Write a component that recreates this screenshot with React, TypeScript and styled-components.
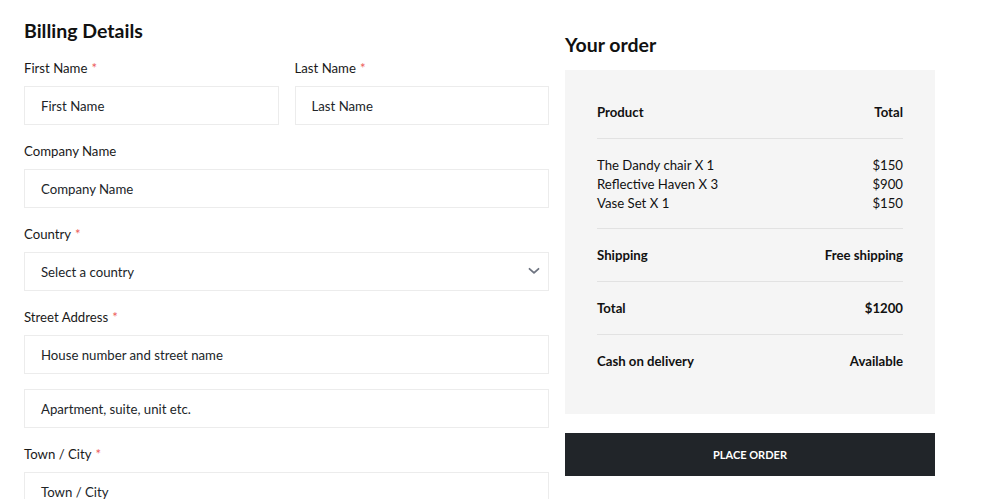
import React from "react";
import styled, { createGlobalStyle } from "styled-components";

const GlobalStyle = createGlobalStyle`
  html, body { margin: 0; padding: 0; background: #ffffff; }
  body {
    font-family: "Lato", "Noto Sans", sans-serif;
    color: #212529;
    -webkit-font-smoothing: antialiased;
  }
  * { box-sizing: border-box; }
`;

const Page = styled.div`
  display: flex;
  align-items: flex-start;
  gap: 16px;
  padding: 19px 0 0 24px;
  width: 992px;
  height: 499px;
  overflow: hidden;
`;

const BillingColumn = styled.section`
  width: 525px;
  flex: none;
`;

const OrderColumn = styled.section`
  width: 370px;
  flex: none;
  margin-top: 14px;
`;

const Heading = styled.h2<{ $gap: number }>`
  margin: 0 0 ${(p) => p.$gap}px;
  font-size: 19.5px;
  line-height: 24px;
  font-weight: 700;
  color: #111111;
`;

const FieldRow = styled.div`
  display: grid;
  grid-template-columns: 1fr 1fr;
  gap: 16px;
`;

const Field = styled.div`
  margin-bottom: 15px;
`;

const Label = styled.label`
  display: block;
  font-size: 13.2px;
  line-height: 22px;
  margin-bottom: 7px;
  color: #1a1a1a;
`;

const Required = styled.span`
  color: #ec5a5a;
  margin-left: 4px;
`;

const InputBox = styled.div<{ $spaced?: boolean }>`
  position: relative;
  height: 39px;
  border: 1px solid #ececec;
  background: #ffffff;
  display: flex;
  align-items: center;
  padding: 0 16px;
  font-size: 13.2px;
  color: #212529;
  margin-top: ${(p) => (p.$spaced ? 15 : 0)}px;
`;

const Chevron = styled.svg`
  position: absolute;
  right: 8px;
  top: 14px;
`;

const Panel = styled.div`
  background: #f5f5f5;
  padding: 32px 32px 27px;
  margin-top: 13px;
`;

const Row = styled.div<{ $first?: boolean; $last?: boolean }>`
  display: flex;
  justify-content: space-between;
  font-size: 13.2px;
  line-height: 20px;
  font-weight: 700;
  color: #111111;
  padding: ${(p) => (p.$first ? 0 : 16)}px 0 16px;
  border-bottom: ${(p) => (p.$last ? "none" : "1px solid #e2e2e2")};
`;

const Items = styled.div`
  padding: 17px 0 15px;
  border-bottom: 1px solid #e2e2e2;
`;

const Item = styled.div`
  display: flex;
  justify-content: space-between;
  font-size: 13.2px;
  line-height: 19px;
  color: #111111;
`;

const PlaceOrder = styled.button`
  display: block;
  width: 100%;
  height: 43px;
  margin-top: 19px;
  border: none;
  background: #212529;
  color: #ffffff;
  font-family: inherit;
  font-size: 11px;
  font-weight: 700;
  text-transform: uppercase;
`;

const items = [
  { name: "The Dandy chair X 1", price: "$150" },
  { name: "Reflective Haven X 3", price: "$900" },
  { name: "Vase Set X 1", price: "$150" },
];

export default function App() {
  return (
    <>
      <GlobalStyle />
      <Page>
        <BillingColumn>
          <Heading $gap={14}>Billing Details</Heading>
          <FieldRow>
            <Field>
              <Label>
                First Name<Required>*</Required>
              </Label>
              <InputBox>First Name</InputBox>
            </Field>
            <Field>
              <Label>
                Last Name<Required>*</Required>
              </Label>
              <InputBox>Last Name</InputBox>
            </Field>
          </FieldRow>
          <Field>
            <Label>Company Name</Label>
            <InputBox>Company Name</InputBox>
          </Field>
          <Field>
            <Label>
              Country<Required>*</Required>
            </Label>
            <InputBox>
              Select a country
              <Chevron width="12" height="8" viewBox="0 0 12 8">
                <polyline
                  points="1.5,1.8 6,5.8 10.5,1.8"
                  fill="none"
                  stroke="#6e7480"
                  strokeWidth="1.8"
                  strokeLinecap="round"
                  strokeLinejoin="round"
                />
              </Chevron>
            </InputBox>
          </Field>
          <Field>
            <Label>
              Street Address<Required>*</Required>
            </Label>
            <InputBox>House number and street name</InputBox>
            <InputBox $spaced>Apartment, suite, unit etc.</InputBox>
          </Field>
          <Field>
            <Label>
              Town / City<Required>*</Required>
            </Label>
            <InputBox>Town / City</InputBox>
          </Field>
        </BillingColumn>
        <OrderColumn>
          <Heading $gap={13}>Your order</Heading>
          <Panel>
            <Row $first>
              <span>Product</span>
              <span>Total</span>
            </Row>
            <Items>
              {items.map((it) => (
                <Item key={it.name}>
                  <span>{it.name}</span>
                  <span>{it.price}</span>
                </Item>
              ))}
            </Items>
            <Row>
              <span>Shipping</span>
              <span>Free shipping</span>
            </Row>
            <Row>
              <span>Total</span>
              <span>$1200</span>
            </Row>
            <Row $last>
              <span>Cash on delivery</span>
              <span>Available</span>
            </Row>
          </Panel>
          <PlaceOrder>Place Order</PlaceOrder>
        </OrderColumn>
      </Page>
    </>
  );
}
